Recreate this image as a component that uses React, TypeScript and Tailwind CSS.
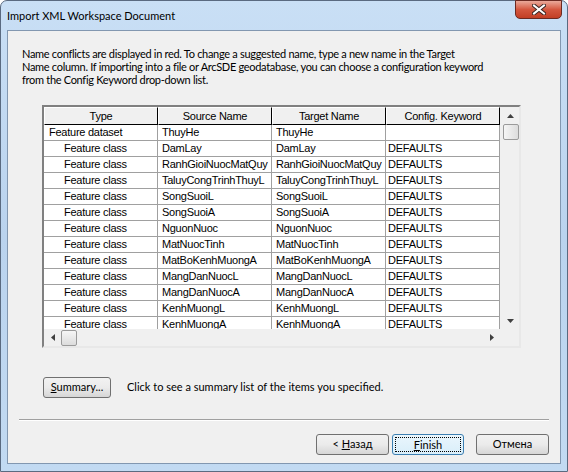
import { Fragment } from 'react'

const rows: [string, string][] = [
  ['Feature dataset', 'ThuyHe'],
  ['Feature class', 'DamLay'],
  ['Feature class', 'RanhGioiNuocMatQuy'],
  ['Feature class', 'TaluyCongTrinhThuyL'],
  ['Feature class', 'SongSuoiL'],
  ['Feature class', 'SongSuoiA'],
  ['Feature class', 'NguonNuoc'],
  ['Feature class', 'MatNuocTinh'],
  ['Feature class', 'MatBoKenhMuongA'],
  ['Feature class', 'MangDanNuocL'],
  ['Feature class', 'MangDanNuocA'],
  ['Feature class', 'KenhMuongL'],
  ['Feature class', 'KenhMuongA'],
]

const ui = "font-['Lato','Noto_Sans',sans-serif]"
const grid = "font-['Liberation_Sans',Arial,sans-serif] text-[11px] tracking-[-0.25px]"

function HeaderCell({ label }: { label: string }) {
  return (
    <div className="h-[18px] flex items-center justify-center bg-[#f0f0f0] border-t border-l border-white border-r border-b border-r-black border-b-black leading-none">
      {label}
    </div>
  )
}

function Cell({ children, className = '' }: { children?: string; className?: string }) {
  return (
    <div className={`h-[16px] border-r border-b border-[#a0a0a0] bg-white leading-[15px] whitespace-nowrap overflow-hidden ${className}`}>
      {children}
    </div>
  )
}

function WinButton({ children, focused = false, className = '' }: { children: React.ReactNode; focused?: boolean; className?: string }) {
  return (
    <button
      className={`h-[21px] rounded-[3px] border text-[11px] flex items-center justify-center ${
        focused
          ? 'border-[#3c7fb1] bg-gradient-to-b from-[#eaf6fd] to-[#d9eefa] p-[2px]'
          : 'border-[#707070] bg-gradient-to-b from-[#f2f2f2] via-[#ebebeb] to-[#d6d6d6]'
      } ${className}`}
    >
      {focused ? (
        <span className="w-full h-full flex items-center justify-center border border-dotted border-black leading-none">{children}</span>
      ) : (
        children
      )}
    </button>
  )
}

export default function App() {
  return (
    <div className={`w-[568px] h-[472px] bg-white ${ui} text-black`}>
      <div className="w-full h-full flex flex-col rounded-t-[7px] border border-[#5a6a80] bg-gradient-to-b from-[#c9dff5] via-[#bad3ee] to-[#c2daf2] px-[6px]">
        {/* title bar */}
        <div className="h-[29px] flex items-start justify-between">
          <span className="pt-[7px] text-[11px] leading-[16px] text-black">Import XML Workspace Document</span>
          <div className="w-[47px] h-[19px] -mt-px mr-[-1px] rounded-b-[5px] border border-[#6b2a22] bg-gradient-to-b from-[#e9a99a] via-[#d4573f] to-[#c23e24] flex items-center justify-center">
            <svg width="14" height="11" viewBox="0 0 14 11">
              <path d="M2 1.5 L12 9.5 M12 1.5 L2 9.5" stroke="#3a2522" strokeWidth="4" strokeLinecap="square" />
              <path d="M2 1.5 L12 9.5 M12 1.5 L2 9.5" stroke="#ffffff" strokeWidth="2" strokeLinecap="square" />
            </svg>
          </div>
        </div>

        {/* client area */}
        <div className="w-[554px] h-[434px] border border-[#8297b0] bg-[#f0f0f0] flex flex-col">
          <p className="mt-[16px] ml-[14px] text-[11px] leading-[13px] tracking-[-0.3px] whitespace-nowrap">
            Name conflicts are displayed in red. To change a suggested name, type a new name in the Target
            <br />
            Name column. If importing into a file or ArcSDE geodatabase, you can choose a configuration keyword
            <br />
            from the Config Keyword drop-down list.
          </p>

          {/* table */}
          <div className={`mt-[19px] ml-[34px] w-[479px] h-[243px] border-2 border-t-[#808080] border-l-[#808080] border-r-[#e8e8e8] border-b-[#e8e8e8] flex flex-col ${grid}`}>
            <div className="flex flex-1 min-h-0">
              <div className="w-[456px] flex flex-col bg-white">
                <div className="grid grid-cols-[114px_114px_114px_114px]">
                  <HeaderCell label="Type" />
                  <HeaderCell label="Source Name" />
                  <HeaderCell label="Target Name" />
                  <HeaderCell label="Config. Keyword" />
                </div>
                <div className="flex-1 min-h-0 overflow-hidden grid grid-cols-[114px_114px_114px_114px] content-start">
                  {rows.map(([type, name], i) => (
                    <Fragment key={name}>
                      <Cell className={i === 0 ? 'pl-[5px]' : 'pl-[20px]'}>{type}</Cell>
                      <Cell className="pl-[4px]">{name}</Cell>
                      <Cell className="pl-[4px]">{name}</Cell>
                      <Cell className="pl-[2px]">{i === 0 ? '' : 'DEFAULTS'}</Cell>
                    </Fragment>
                  ))}
                </div>
              </div>
              {/* vertical scrollbar */}
              <div className="w-[19px] bg-[#f0f0f0] flex flex-col items-center pl-[2px]">
                <div className="h-[17px] w-full flex items-center justify-center">
                  <svg width="7" height="4" viewBox="0 0 7 4"><path d="M0 4 L3.5 0 L7 4 Z" fill="#404040" /></svg>
                </div>
                <div className="w-[16px] h-[16px] rounded-[2px] border border-[#9a9a9a] bg-gradient-to-r from-[#f6f6f6] to-[#dcdcdc]" />
                <div className="flex-1" />
                <div className="h-[17px] w-full flex items-center justify-center">
                  <svg width="7" height="4" viewBox="0 0 7 4"><path d="M0 0 L7 0 L3.5 4 Z" fill="#404040" /></svg>
                </div>
              </div>
            </div>
            {/* horizontal scrollbar */}
            <div className="h-[17px] flex">
              <div className="w-[456px] bg-[#f0f0f0] flex items-center">
                <div className="w-[17px] h-full flex items-center justify-center">
                  <svg width="4" height="7" viewBox="0 0 4 7"><path d="M4 0 L0 3.5 L4 7 Z" fill="#404040" /></svg>
                </div>
                <div className="w-[16px] h-[16px] rounded-[2px] border border-[#9a9a9a] bg-gradient-to-b from-[#f6f6f6] to-[#dcdcdc]" />
                <div className="flex-1" />
                <div className="w-[17px] h-full flex items-center justify-center">
                  <svg width="4" height="7" viewBox="0 0 4 7"><path d="M0 0 L4 3.5 L0 7 Z" fill="#404040" /></svg>
                </div>
              </div>
              <div className="w-[19px] bg-[#f0f0f0]" />
            </div>
          </div>

          {/* summary */}
          <div className="mt-[29px] ml-[35px] flex items-center gap-[16px] text-[11px]">
            <WinButton className="w-[68px] h-[19px]">
              <span><span className="underline">S</span>ummary...</span>
            </WinButton>
            <span>Click to see a summary list of the items you specified.</span>
          </div>

          <div className="mt-[21px] ml-[11px] w-[530px] h-[2px] border-t border-[#a0a0a0] border-b border-b-white" />

          <div className="mt-[13px] mr-[11px] flex justify-end">
            <WinButton className="w-[73px]">
              <span>&lt; <span className="underline">Н</span>азад</span>
            </WinButton>
            <WinButton focused className="w-[72px] ml-[3px]">
              <span><span className="underline">F</span>inish</span>
            </WinButton>
            <WinButton className="w-[73px] ml-[12px]">Отмена</WinButton>
          </div>
        </div>
      </div>
    </div>
  )
}
